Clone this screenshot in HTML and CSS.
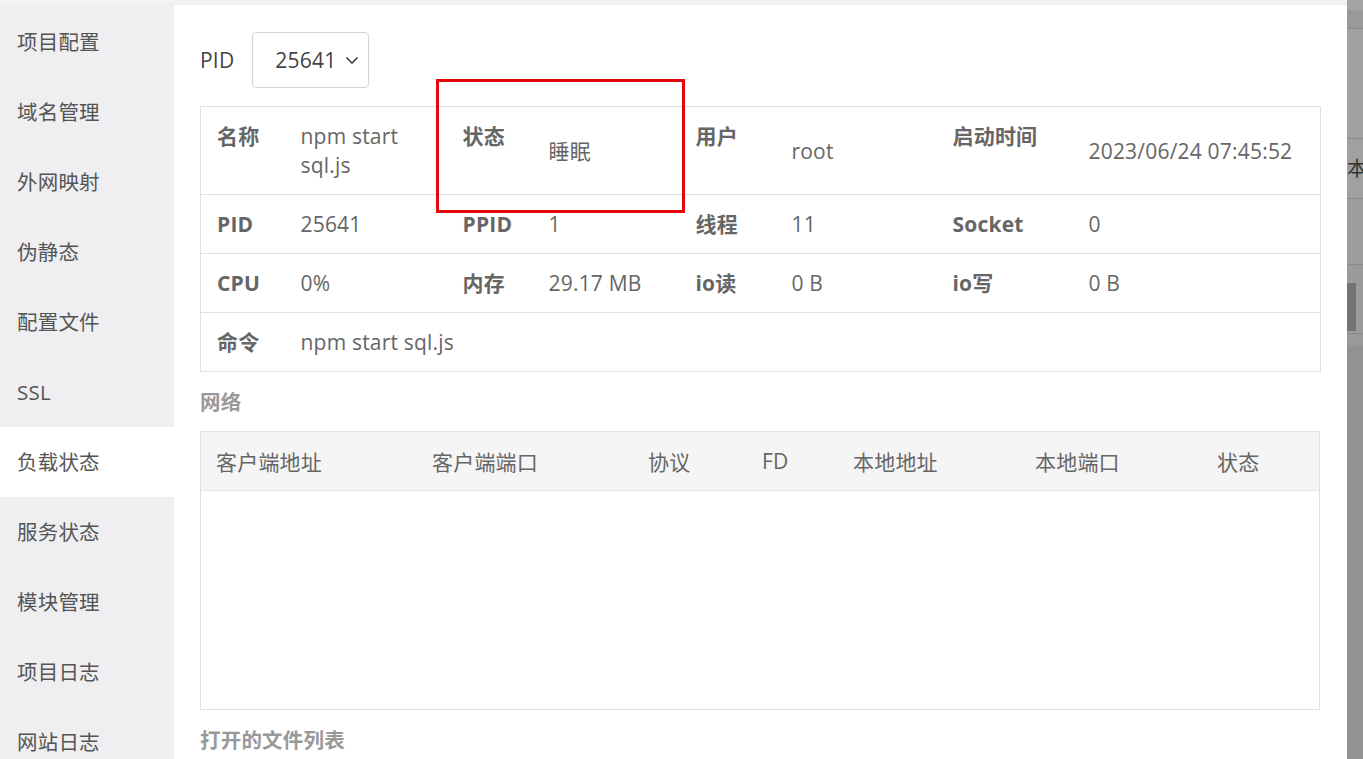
FILE: index.html
```html
<!DOCTYPE html>
<html lang="zh-CN">
<head>
<meta charset="utf-8">
<title>负载状态</title>
<link rel="stylesheet" href="styles.css">
</head>
<body>
<div class="page">
  <div class="topband"></div>
  <div class="frame">
    <nav class="sidebar">
      <div class="nav-item">项目配置</div>
      <div class="nav-item">域名管理</div>
      <div class="nav-item">外网映射</div>
      <div class="nav-item">伪静态</div>
      <div class="nav-item">配置文件</div>
      <div class="nav-item">SSL</div>
      <div class="nav-item active">负载状态</div>
      <div class="nav-item">服务状态</div>
      <div class="nav-item">模块管理</div>
      <div class="nav-item">项目日志</div>
      <div class="nav-item">网站日志</div>
    </nav>
    <main class="main">
      <div class="pid-row">
        <span class="pid-label">PID</span>
        <div class="select">
          <span>25641</span>
          <svg class="chev" width="14" height="9" viewBox="0 0 14 9"><polyline points="1.5,1.5 7,7 12.5,1.5" fill="none" stroke="#444" stroke-width="1.6"/></svg>
        </div>
      </div>
      <table class="info">
        <colgroup>
          <col style="width:84px"><col style="width:162px">
          <col style="width:86px"><col style="width:147px">
          <col style="width:96px"><col style="width:161px">
          <col style="width:136px"><col style="width:248px">
        </colgroup>
        <tr>
          <th>名称</th><td>npm start sql.js</td>
          <th>状态</th><td>睡眠</td>
          <th>用户</th><td>root</td>
          <th>启动时间</th><td>2023/06/24 07:45:52</td>
        </tr>
        <tr>
          <th>PID</th><td>25641</td>
          <th>PPID</th><td>1</td>
          <th>线程</th><td>11</td>
          <th>Socket</th><td>0</td>
        </tr>
        <tr>
          <th>CPU</th><td>0%</td>
          <th>内存</th><td>29.17 MB</td>
          <th>io读</th><td>0 B</td>
          <th>io写</th><td>0 B</td>
        </tr>
        <tr>
          <th>命令</th><td colspan="7">npm start sql.js</td>
        </tr>
      </table>
      <h3 class="section">网络</h3>
      <div class="net">
        <div class="net-head">
          <div class="c1">客户端地址</div>
          <div class="c2">客户端端口</div>
          <div class="c3">协议</div>
          <div class="c4">FD</div>
          <div class="c5">本地地址</div>
          <div class="c6">本地端口</div>
          <div class="c7">状态</div>
        </div>
        <div class="net-body"></div>
      </div>
      <h3 class="section">打开的文件列表</h3>
    </main>
    <div class="overlay">
      <div class="ov a"></div>
      <div class="ov b"></div>
      <div class="ov c"></div>
      <div class="ov d"><span>本</span></div>
      <div class="ov e"></div>
      <div class="ov f"><div class="blk"></div></div>
      <div class="ov g"></div>
    </div>
  </div>
  <div class="mark"></div>
</div>
</body>
</html>
```
FILE: styles.css
```css
html, body {
  margin: 0;
  padding: 0;
  background: #fff;
}
body {
  width: 1363px;
  height: 759px;
  overflow: hidden;
  font-family: "Open Sans", "Noto Sans CJK SC", sans-serif;
  font-size: 21px;
  letter-spacing: 0.2px;
  color: #666;
}
.page {
  position: relative;
  width: 1363px;
  height: 759px;
  display: flex;
  flex-direction: column;
}
.topband {
  height: 4px;
  background: #f3f3f3;
  border-bottom: 1px solid #ececec;
  margin-right: 16px;
}
.frame {
  flex: 1;
  display: flex;
  min-height: 0;
}
.sidebar {
  width: 174px;
  flex: none;
  background: #efeff1;
  padding-top: 2px;
}
.nav-item {
  height: 70px;
  line-height: 70px;
  padding-left: 17px;
  color: #555;
  font-size: 20.5px;
}
.nav-item.active {
  background: #fff;
}
.main {
  flex: 1;
  padding: 27px 0 0 26px;
  background: #fff;
  min-width: 0;
}
.pid-row {
  display: flex;
  align-items: center;
  height: 56px;
}
.pid-label {
  color: #444;
  margin-right: 18px;
}
.select {
  width: 117px;
  height: 56px;
  box-sizing: border-box;
  border: 1px solid #d4d4d4;
  border-radius: 4px;
  display: flex;
  align-items: center;
  padding-left: 22px;
  color: #444;
}
.select .chev {
  margin-left: 9px;
}
.info {
  margin-top: 18px;
  border-collapse: collapse;
  width: 1120px;
  table-layout: fixed;
  border: 1px solid #e0e0e0;
}
.info th, .info td {
  border-top: 1px solid #e0e0e0;
  border-bottom: 1px solid #e0e0e0;
  padding: 15px 0 14px 16px;
  line-height: 29px;
  text-align: left;
  color: #666;
  font-size: 21px;
}
.info th {
  vertical-align: top;
  font-weight: bold;
}
.info td {
  vertical-align: middle;
  font-weight: normal;
  padding-right: 10px;
}
.section {
  margin: 16px 0 14px;
  line-height: 29px;
  font-size: 20.5px;
  font-weight: bold;
  color: #999;
}
.net {
  width: 1120px;
  box-sizing: border-box;
  border: 1px solid #e0e0e0;
}
.net-head {
  display: grid;
  grid-template-columns: 216px 216px 114px 91px 182px 182px 1fr;
  height: 58px;
  align-items: center;
  background: #f5f5f5;
  border-bottom: 1px solid #e4e4e4;
}
.net-head div {
  padding-left: 15px;
  color: #666;
}
.net-body {
  height: 218px;
}
.overlay {
  width: 16px;
  flex: none;
  background: #929292;
  display: flex;
  flex-direction: column;
  margin-top: -5px;
  overflow: hidden;
}
.ov {
  border-bottom: 1px solid #8a8a8a;
}
.ov.a { height: 10px; background: #a4a4a4; border-color: #9b9b9b; }
.ov.b { height: 17px; background: #999; }
.ov.c { height: 109px; background: #a0a0a0; }
.ov.d {
  height: 59px;
  background: #a0a0a0;
  position: relative;
  overflow: hidden;
}
.ov.d span {
  position: absolute;
  left: 0;
  top: 15px;
  font-size: 20px;
  line-height: 29px;
  color: #333;
}
.ov.e { height: 65px; background: #9d9d9d; }
.ov.f {
  height: 69px;
  background: #9b9b9b;
  padding-top: 18px;
  box-sizing: border-box;
}
.ov.f .blk {
  width: 9px;
  height: 48px;
  background: #737373;
}
.ov.g { height: 12px; background: #999; border: 0; }
.mark {
  position: absolute;
  left: 436px;
  top: 79px;
  width: 249px;
  height: 134px;
  box-sizing: border-box;
  border: 3px solid #e4070c;
}
```
